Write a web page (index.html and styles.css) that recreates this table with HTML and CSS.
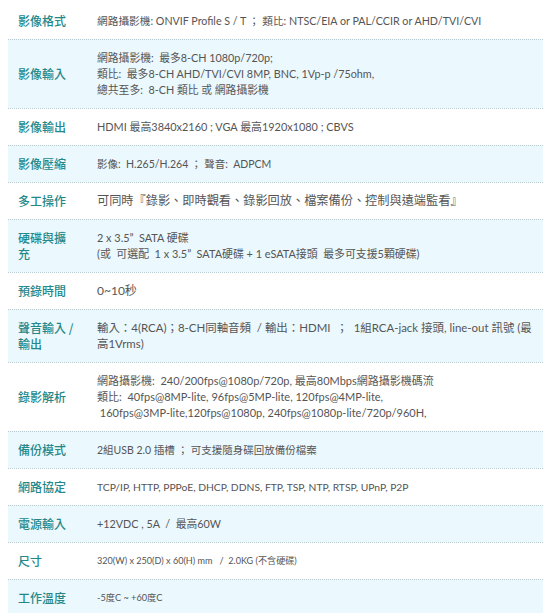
FILE: index.html
```html
<!DOCTYPE html>
<html lang="zh-Hant">
<head>
<meta charset="utf-8">
<title>規格</title>
<link rel="stylesheet" href="styles.css">
</head>
<body>
<div class="spec">
  <div class="row">
    <div class="label">影像格式</div>
    <div class="value fs107">網路攝影機: ONVIF Profile S / T ； 類比: NTSC/EIA or PAL/CCIR or AHD/TVI/CVI</div>
  </div>
  <div class="row alt">
    <div class="label">影像輸入</div>
    <div class="value fs108">網路攝影機:&nbsp; 最多8-CH 1080p/720p;<br>類比:&nbsp; 最多8-CH AHD/TVI/CVI 8MP, BNC, 1Vp-p /75ohm,<br>總共至多:&nbsp; 8-CH 類比 或 網路攝影機</div>
  </div>
  <div class="row">
    <div class="label">影像輸出</div>
    <div class="value fs109">HDMI 最高3840x2160 ; VGA 最高1920x1080 ; CBVS</div>
  </div>
  <div class="row alt">
    <div class="label">影像壓縮</div>
    <div class="value fs105">影像:&nbsp; H.265/H.264 ； 聲音:&nbsp; ADPCM</div>
  </div>
  <div class="row">
    <div class="label">多工操作</div>
    <div class="value fs122">可同時『錄影、即時觀看、錄影回放、檔案備份、控制與遠端監看』</div>
  </div>
  <div class="row alt">
    <div class="label">硬碟與擴充</div>
    <div class="value fs109">2 x 3.5”&nbsp; SATA 硬碟<br>(或&nbsp; 可選配&nbsp; 1 x 3.5”&nbsp; SATA硬碟 + 1 eSATA接頭&nbsp; 最多可支援5顆硬碟)</div>
  </div>
  <div class="row">
    <div class="label">預錄時間</div>
    <div class="value fs120">0~10秒</div>
  </div>
  <div class="row alt">
    <div class="label">聲音輸入 / 輸出</div>
    <div class="value fs114">輸入：4(RCA)；8-CH同軸音頻&nbsp; / 輸出：HDMI&nbsp; ；&nbsp; 1組RCA-jack 接頭, line-out 訊號 (最高1Vrms)</div>
  </div>
  <div class="row">
    <div class="label">錄影解析</div>
    <div class="value fs110">網路攝影機:&nbsp; 240/200fps@1080p/720p, 最高80Mbps網路攝影機碼流<br>類比:&nbsp; 40fps@8MP-lite, 96fps@5MP-lite, 120fps@4MP-lite,<br>&nbsp;160fps@3MP-lite,120fps@1080p, 240fps@1080p-lite/720p/960H,</div>
  </div>
  <div class="row alt">
    <div class="label">備份模式</div>
    <div class="value fs105">2組USB 2.0 插槽 ； 可支援隨身碟回放備份檔案</div>
  </div>
  <div class="row">
    <div class="label">網路協定</div>
    <div class="value fs103">TCP/IP, HTTP, PPPoE, DHCP, DDNS, FTP, TSP, NTP, RTSP, UPnP, P2P</div>
  </div>
  <div class="row alt">
    <div class="label">電源輸入</div>
    <div class="value fs108">+12VDC , 5A&nbsp; /&nbsp; 最高60W</div>
  </div>
  <div class="row">
    <div class="label">尺寸</div>
    <div class="value fs91">320(W) x 250(D) x 60(H) mm&nbsp;&nbsp; /&nbsp; 2.0KG (不含硬碟)</div>
  </div>
  <div class="row alt">
    <div class="label">工作溫度</div>
    <div class="value fs92">-5度C ~ +60度C</div>
  </div>
</div>
</body>
</html>
```
FILE: styles.css
```css
html, body {
  margin: 0;
  padding: 0;
  background: #ffffff;
}
body {
  padding: 3px 0 0 8px;
}
.spec {
  display: flex;
  flex-direction: column;
}
.row {
  display: grid;
  grid-template-columns: 79px 1fr;
  align-items: center;
  border-top: 1px dotted #b9cbd0;
  background: #ffffff;
}
.row:first-child {
  border-top: none;
}
.row.alt {
  background: #ebf8fd;
}
.label {
  padding: 10px 11px 10px 10px;
  font-family: "Noto Sans CJK TC", sans-serif;
  font-size: 12px;
  font-weight: 500;
  line-height: 16px;
  color: #23888a;
}
.value {
  padding: 10px 6px 10px 10px;
  font-family: Lato, "Noto Sans CJK TC", sans-serif;
  font-size: 11px;
  line-height: 16px;
  color: #555555;
}
.fs91 { font-size: 9.1px; }
.fs92 { font-size: 9.2px; }
.fs103 { font-size: 10.3px; }
.fs105 { font-size: 10.5px; }
.fs107 { font-size: 10.7px; }
.fs108 { font-size: 10.8px; }
.fs109 { font-size: 10.9px; }
.fs110 { font-size: 11px; }
.fs114 { font-size: 11.45px; }
.fs120 { font-size: 12px; }
.fs122 { font-size: 12.2px; }
```
